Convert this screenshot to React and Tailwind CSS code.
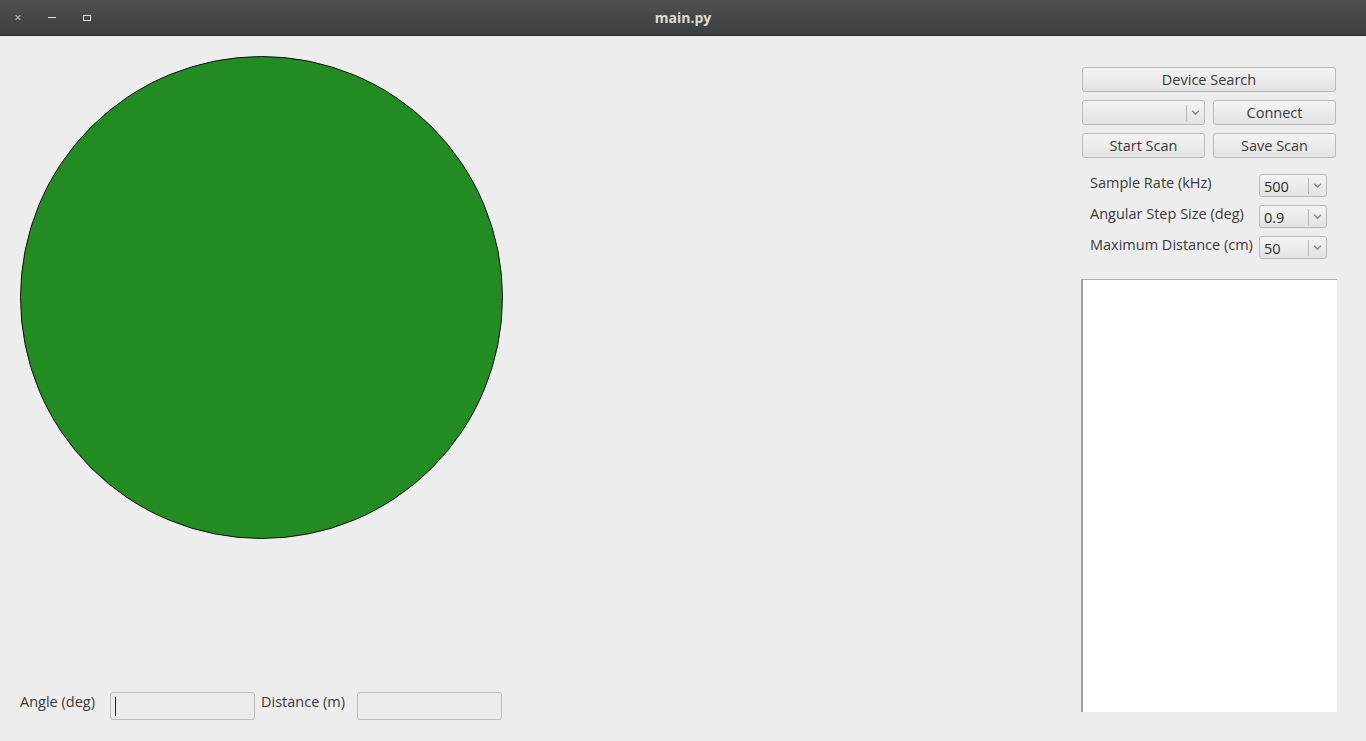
import React from 'react'

const font = { fontFamily: '"Open Sans", "Liberation Sans", sans-serif' }

const Chevron = ({ className }) => (
    <svg viewBox="0 0 8 6" className={className} fill="none" stroke="#8a8a8a" strokeWidth="1.4">
        <path d="M1 1.5 L4 4.5 L7 1.5" />
    </svg>
)

const Button = ({ children, className }) => (
    <button className={`h-[25px] pt-[2px] rounded-[3px] border border-[#b9b9b9] bg-gradient-to-b from-[#f4f4f4] to-[#e3e3e3] text-[14.5px] text-[#3a3a3a] leading-none flex items-center justify-center ${className}`}>
        {children}
    </button>
)

const Combo = ({ value, className, height = 'h-[25px]' }) => (
    <div className={`${height} rounded-[3px] border border-[#b9b9b9] bg-gradient-to-b from-[#f4f4f4] to-[#e3e3e3] flex items-center ${className}`}>
        <span className="flex-1 pl-[4px] pt-[4px] text-[14.5px] text-[#2a2a2a] leading-none">{value}</span>
        <div className="w-px h-[16px] bg-[#b5b5b5]" />
        <div className="w-[17px] flex items-center justify-center">
            <Chevron className="w-[9px] h-[7px]" />
        </div>
    </div>
)

const SettingRow = ({ label, value }) => (
    <div className="flex items-center h-[23px]">
        <span className="w-[178px] pl-[9px] pb-[6px] text-[14.5px] text-[#3a3a3a] whitespace-nowrap">{label}</span>
        <Combo value={value} height="h-[23px]" className="w-[68px]" />
    </div>
)

const App = () => {
    return (
        <div className="w-[1366px] h-[741px] bg-[#ededed] flex flex-col overflow-hidden" style={font}>
            {/* Title bar */}
            <div className="relative h-[36px] shrink-0 bg-gradient-to-b from-[#4d5151] to-[#3b3e3e] border-b border-[#2b2d2d] flex items-center justify-center">
                <div className="absolute left-0 top-0 h-full flex items-center">
                    <span className="w-[36px] text-center text-[12px] text-[#d8d8d8]">×</span>
                    <span className="w-[32px] flex justify-center"><span className="w-[8px] h-px bg-[#e0e0e0]" /></span>
                    <span className="w-[38px] flex justify-center"><span className="w-[8px] h-[6px] border border-[#e0e0e0]" /></span>
                </div>
                <span className="text-[14px] font-bold text-[#dfdbd2]">main.py</span>
            </div>

            {/* Body */}
            <div className="flex-1 flex">
                {/* Left */}
                <div className="w-[1081px] flex flex-col justify-between pl-[20px] pt-[20px] pb-[21px]">
                    <div className="w-[483px] h-[483px] rounded-full bg-[#228b22] border border-[#111]" />
                    <div className="flex items-center h-[28px]">
                        <span className="w-[90px] pb-[9px] text-[14.5px] text-[#3a3a3a]">Angle (deg)</span>
                        <div className="w-[145px] h-[28px] rounded-[3px] border border-[#bdbdbd] bg-[#ececec] flex items-center pl-[4px]">
                            <span className="w-px h-[19px] bg-[#222]" />
                        </div>
                        <span className="w-[102px] pl-[6px] pb-[9px] text-[14.5px] text-[#3a3a3a]">Distance (m)</span>
                        <div className="w-[145px] h-[28px] rounded-[3px] border border-[#bdbdbd] bg-[#ececec]" />
                    </div>
                </div>

                {/* Right */}
                <div className="w-[256px] flex flex-col pt-[31px]">
                    <div className="pl-[1px] flex flex-col gap-[8px]">
                        <Button className="w-[254px]">Device Search</Button>
                        <div className="flex gap-[8px]">
                            <Combo value="" className="w-[123px]" />
                            <Button className="w-[123px]">Connect</Button>
                        </div>
                        <div className="flex gap-[8px]">
                            <Button className="w-[123px]">Start Scan</Button>
                            <Button className="w-[123px]">Save Scan</Button>
                        </div>
                    </div>
                    <div className="flex flex-col gap-[8px] mt-[16px]">
                        <SettingRow label="Sample Rate (kHz)" value="500" />
                        <SettingRow label="Angular Step Size (deg)" value="0.9" />
                        <SettingRow label="Maximum Distance (cm)" value="50" />
                    </div>
                    <div className="mt-[20px] h-[433px] bg-white border-l-2 border-t border-l-[#a0a0a0] border-t-[#b0b0b0]" />
                </div>
            </div>
        </div>
    )
}

export default App
